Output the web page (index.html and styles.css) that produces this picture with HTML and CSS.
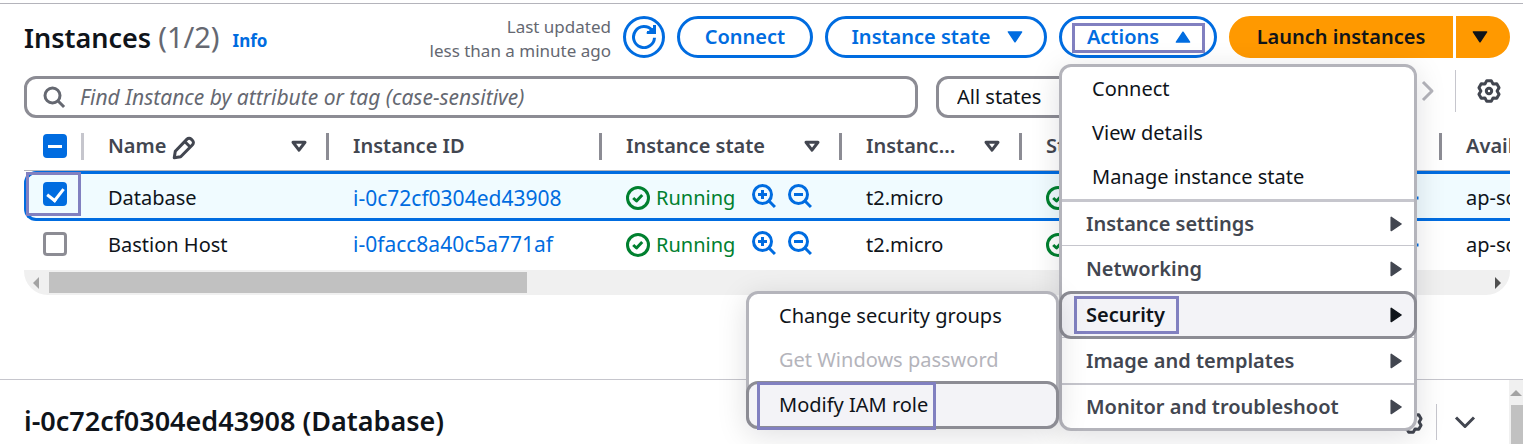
FILE: index.html
```html
<!DOCTYPE html>
<html lang="en">
<head>
<meta charset="utf-8">
<title>Instances</title>
<link rel="stylesheet" href="styles.css">
</head>
<body>
<svg class="sprite" aria-hidden="true">
  <symbol id="i-down" viewBox="0 0 16 16"><path d="M3.6 4.6h8.8L8 11.2z" fill="currentColor"/></symbol>
  <symbol id="i-up" viewBox="0 0 16 16"><path d="M3.6 11.4h8.8L8 4.8z" fill="currentColor"/></symbol>
  <symbol id="i-right" viewBox="0 0 16 16"><path d="M4.8 3.6v8.8L11.4 8z" fill="currentColor"/></symbol>
  <symbol id="i-sort" viewBox="0 0 16 16"><path d="M4 5.5h8l-4 5.3z"/></symbol>
  <symbol id="i-refresh" viewBox="0 0 16 16"><path d="M15 8.5A7 7 0 1 1 13.4 3.6"/><path d="M10 5h5V0M14.5 2.5v2H12z" stroke-linejoin="miter"/></symbol>
  <symbol id="i-search" viewBox="0 0 16 16"><circle cx="7" cy="7" r="5"/><path d="m10.7 10.7 4 4"/></symbol>
  <symbol id="i-edit" viewBox="0 0 16 16"><path d="M1.5 14.5l.7-4.3L10 2.1a2 2 0 0 1 2.8 0l.9.9a2 2 0 0 1 0 2.8L5.8 13.8zM9 4.2l2.8 2.8"/></symbol>
  <symbol id="i-ok" viewBox="0 0 16 16"><circle cx="8" cy="8" r="7"/><path d="m4.8 8 2.2 2 3.8-4"/></symbol>
  <symbol id="i-zin" viewBox="0 0 16 16"><circle cx="7" cy="7" r="6"/><path d="m11.3 11.3 4 4M4 7h6M7 4v6"/></symbol>
  <symbol id="i-zout" viewBox="0 0 16 16"><circle cx="7" cy="7" r="6"/><path d="m11.3 11.3 4 4M4 7h6"/></symbol>
  <symbol id="i-plus" viewBox="0 0 16 16"><path d="M1 8h14M8 1v14"/></symbol>
  <symbol id="i-gear" viewBox="-8 -8 16 16"><path d="M-1.5-6.9h3l1.2 2.2 2.5-.1L6.7-2.2 5.4 0l1.3 2.2-1.5 2.6-2.5-.1-1.2 2.2h-3l-1.2-2.2-2.5.1-1.5-2.6L-5.4 0l-1.3-2.2 1.5-2.6 2.5.1z"/><circle r="1.8"/></symbol>
  <symbol id="i-next" viewBox="0 0 16 16"><path d="m4 2 6 6-6 6"/></symbol>
  <symbol id="i-expand" viewBox="0 0 16 16"><path d="m2 5 6 6 6-6"/></symbol>
</svg>

<div class="page">
  <main class="instances">
    <header class="toolbar">
      <h1 class="title">Instances <span class="count">(1/2)</span></h1>
      <a class="info" href="#">Info</a>
      <p class="updated">Last updated<br>less than a minute ago</p>
      <div class="actions">
        <button class="btn btn-round" aria-label="Refresh"><svg class="icon"><use href="#i-refresh"/></svg></button>
        <button class="btn">Connect</button>
        <button class="btn btn-menu">Instance state <svg class="icon"><use href="#i-down"/></svg></button>
        <div class="dropdown">
          <button class="btn btn-menu btn-actions" aria-expanded="true">Actions <svg class="icon"><use href="#i-up"/></svg></button>
          <span class="mark mark-actions"></span>
          <div class="menu" role="menu">
            <button class="item" role="menuitem">Connect</button>
            <button class="item" role="menuitem">View details</button>
            <button class="item" role="menuitem">Manage instance state</button>
            <button class="item group first" role="menuitem">Instance settings <svg class="icon"><use href="#i-right"/></svg></button>
            <button class="item group" role="menuitem">Networking <svg class="icon"><use href="#i-right"/></svg></button>
            <div class="nested">
              <button class="item group active" role="menuitem" aria-expanded="true">Security <svg class="icon"><use href="#i-right"/></svg></button>
              <span class="mark mark-security"></span>
              <div class="menu submenu" role="menu">
                <button class="item" role="menuitem">Change security groups</button>
                <button class="item" role="menuitem" disabled>Get Windows password</button>
                <button class="item active" role="menuitem">Modify IAM role</button>
                <span class="mark mark-role"></span>
              </div>
            </div>
            <button class="item group" role="menuitem">Image and templates <svg class="icon"><use href="#i-right"/></svg></button>
            <button class="item group last" role="menuitem">Monitor and troubleshoot <svg class="icon"><use href="#i-right"/></svg></button>
          </div>
        </div>
        <div class="split">
          <button class="btn btn-primary">Launch instances</button>
          <button class="btn btn-primary btn-caret" aria-label="More launch options"><svg class="icon"><use href="#i-down"/></svg></button>
        </div>
      </div>
    </header>

    <div class="filters">
      <label class="search">
        <svg class="icon"><use href="#i-search"/></svg>
        <input type="text" aria-label="Find Instance" placeholder="Find Instance by attribute or tag (case-sensitive)">
      </label>
      <select class="states" aria-label="State"><option>All states</option></select>
      <div class="pager">
        <button class="plain next" aria-label="Next page"><svg class="icon"><use href="#i-next"/></svg></button>
        <button class="plain prefs" aria-label="Preferences"><svg class="icon"><use href="#i-gear"/></svg></button>
      </div>
    </div>

    <div class="table-wrap">
      <table class="table">
        <colgroup><col class="c-check"><col class="c-name"><col class="c-id"><col class="c-state"><col class="c-type"><col class="c-status"><col class="c-alarm"><col class="c-zone"></colgroup>
        <thead>
          <tr>
            <th class="check"><input type="checkbox" class="box mixed" aria-label="Select all"></th>
            <th><div class="head"><span>Name</span><svg class="icon edit"><use href="#i-edit"/></svg><svg class="icon sort"><use href="#i-sort"/></svg></div></th>
            <th><div class="head"><span>Instance ID</span></div></th>
            <th><div class="head"><span>Instance state</span><svg class="icon sort"><use href="#i-sort"/></svg></div></th>
            <th><div class="head"><span>Instanc…</span><svg class="icon sort"><use href="#i-sort"/></svg></div></th>
            <th><div class="head"><span>St…</span></div></th>
            <th><div class="head"></div></th>
            <th><div class="head"><span>Availability Zone</span></div></th>
          </tr>
        </thead>
        <tbody>
          <tr class="selected">
            <td class="check"><input type="checkbox" class="box" aria-label="Select Database" checked><span class="mark mark-check"></span></td>
            <td>Database</td>
            <td><a class="id" href="#">i-0c72cf0304ed43908</a></td>
            <td><div class="state"><svg class="icon"><use href="#i-ok"/></svg><span>Running</span><button class="plain" aria-label="Include"><svg class="icon"><use href="#i-zin"/></svg></button><button class="plain" aria-label="Exclude"><svg class="icon"><use href="#i-zout"/></svg></button></div></td>
            <td>t2.micro</td>
            <td><div class="state"><svg class="icon"><use href="#i-ok"/></svg></div></td>
            <td class="alarm"><button class="plain" aria-label="Add alarm"><svg class="icon"><use href="#i-plus"/></svg></button></td>
            <td>ap-south-1a</td>
          </tr>
          <tr>
            <td class="check"><input type="checkbox" class="box" aria-label="Select Bastion Host"></td>
            <td>Bastion Host</td>
            <td><a class="id" href="#">i-0facc8a40c5a771af</a></td>
            <td><div class="state"><svg class="icon"><use href="#i-ok"/></svg><span>Running</span><button class="plain" aria-label="Include"><svg class="icon"><use href="#i-zin"/></svg></button><button class="plain" aria-label="Exclude"><svg class="icon"><use href="#i-zout"/></svg></button></div></td>
            <td>t2.micro</td>
            <td><div class="state"><svg class="icon"><use href="#i-ok"/></svg></div></td>
            <td class="alarm"><button class="plain" aria-label="Add alarm"><svg class="icon"><use href="#i-plus"/></svg></button></td>
            <td>ap-south-1a</td>
          </tr>
        </tbody>
      </table>
      <div class="scroll-x"><span class="arrow arrow-left"></span><span class="thumb"></span><span class="arrow arrow-right"></span></div>
    </div>
  </main>

  <section class="panel">
    <h2 class="panel-title">i-0c72cf0304ed43908 (Database)</h2>
    <div class="panel-tools">
      <button class="plain" aria-label="Panel preferences"><svg class="icon"><use href="#i-gear"/></svg></button>
      <button class="plain collapse" aria-label="Collapse panel"><svg class="icon"><use href="#i-expand"/></svg></button>
    </div>
    <div class="scroll-y"><span class="arrow arrow-top"></span><span class="thumb"></span></div>
  </section>
</div>
</body>
</html>
```
FILE: styles.css
```css
* { box-sizing: border-box; }

body {
  margin: 0;
  overflow: hidden;
  background: #fff;
  color: #0f141a;
  font: 20px/30px "Noto Sans", "Open Sans", sans-serif;
}

button, input, select { font: inherit; color: inherit; }
button { cursor: pointer; }
a { color: #006ce0; text-decoration: none; }

.sprite { position: absolute; width: 0; height: 0; }

.icon {
  width: 24px;
  height: 24px;
  flex: none;
  display: block;
  fill: none;
  stroke: currentColor;
  stroke-width: 2;
  stroke-linejoin: round;
}
.btn .icon, .item .icon { stroke-width: 1; }
.btn .icon { overflow: visible; }

.page {
  display: flex;
  flex-direction: column;
  height: 100vh;
  padding-top: 3px;
}

.instances {
  flex: 1;
  min-height: 0;
  border-top: 1px solid #b4b4bb;
  padding: 12px 13px 0 24px;
}

/* Toolbar */
.toolbar { display: flex; align-items: center; height: 42px; }
.title { margin: 0; font-size: 27px; line-height: 40px; font-weight: 600; }
.count { color: #656871; font-size: 29px; font-weight: 400; }
.info { margin: 8px 0 0 13px; font-size: 17px; font-weight: 700; }
.updated {
  margin: 4px 12px 0 auto;
  color: #656871;
  font-size: 17px;
  line-height: 24px;
  text-align: right;
}
.actions { display: flex; gap: 12px; }

.btn {
  display: flex;
  align-items: center;
  justify-content: center;
  gap: 12px;
  min-width: 136px;
  height: 42px;
  padding: 0;
  border: 3px solid #006ce0;
  border-radius: 21px;
  background: #fff;
  color: #006ce0;
  font-weight: 600;
  white-space: nowrap;
}
.btn-round { min-width: 42px; }
.btn.btn-round .icon { stroke-width: 2; }
.btn-menu { min-width: 222px; }
.btn-menu .icon { margin-right: -6px; }
.btn-actions { min-width: 158px; }
.split { display: flex; gap: 3px; }
.btn-primary {
  min-width: 224px;
  border-color: #ff9900;
  border-radius: 21px 0 0 21px;
  background: #ff9900;
  color: #0f141a;
}
.btn-caret { min-width: 54px; padding-right: 6px; border-radius: 0 21px 21px 0; }

/* Callout frames */
.mark {
  position: absolute;
  border: 3px solid #8180c0;
  pointer-events: none;
}
.mark-actions { top: 7px; left: 13px; right: 12px; bottom: 5px; }
.mark-check { top: -2px; left: -1px; right: 3px; bottom: 2px; }
.mark-security { top: 5px; left: 15px; width: 105px; height: 38px; }
.mark-role { left: 8px; bottom: -4px; width: 179px; height: 48px; }

/* Menus */
.dropdown { position: relative; }
.menu {
  position: absolute;
  z-index: 2;
  top: 48px;
  left: 0;
  width: 358px;
  border: 3px solid #b4b4bb;
  border-radius: 12px;
  background: #fff;
  box-shadow: 0 6px 30px rgba(0, 7, 22, 0.13);
}
.item {
  display: flex;
  align-items: center;
  justify-content: space-between;
  width: 100%;
  height: 44px;
  padding: 0 30px;
  border: 0;
  background: none;
  text-align: left;
}
.item:disabled { color: #b4b4bb; }
.group {
  height: 46px;
  padding: 0 6px 0 24px;
  border-top: 1px solid #c6c6cd;
  color: #424650;
  font-weight: 600;
}
.first { border-top-width: 3px; }
.last { height: 45px; border-top-width: 2px; }
.nested { position: relative; z-index: 1; margin: 0 -3px -2px; }
.active {
  height: 48px;
  border: 3px solid #8c8c94;
  border-radius: 12px;
  background: #f3f3f7;
}
.nested > .active { color: #0f141a; }
.submenu { top: 0; left: auto; right: 100%; width: 313px; }
.submenu .active { width: 313px; margin: -1px -3px -3px; }

/* Filters */
.filters { display: flex; align-items: center; margin-top: 18px; }
.search {
  display: flex;
  align-items: center;
  gap: 14px;
  flex: 1;
  height: 42px;
  padding: 0 15px;
  border: 3px solid #8c8c94;
  border-radius: 12px;
  color: #656871;
}
.search input { flex: 1; min-width: 0; padding: 0; border: 0; outline: 0; background: none; font-size: 21px; }
.search input::placeholder { color: #656871; font-style: italic; opacity: 1; }
.states {
  width: 250px;
  height: 42px;
  margin: 0 18px;
  padding: 0 18px;
  border: 3px solid #8c8c94;
  border-radius: 12px;
  background: #fff;
  appearance: none;
}
.pager { display: flex; align-items: center; justify-content: flex-end; width: 306px; margin-top: -12px; }
.plain { display: block; padding: 0; border: 0; background: none; }
.next { color: #b4b4bb; }
.prefs { margin-left: 14px; padding: 9px 9px 9px 21px; border-left: 1px solid #c6c6cd; color: #424650; }

/* Table */
.table-wrap { overflow: hidden; margin-top: 4px; }
.table { width: 1620px; table-layout: fixed; border-collapse: separate; border-spacing: 0; }
.c-check { width: 60px; }
.c-name { width: 245px; }
.c-id { width: 273px; }
.c-state { width: 240px; }
.c-type { width: 180px; }
.c-status { width: 180px; }
.c-alarm { width: 240px; }
th {
  height: 49px;
  padding: 0;
  border-bottom: 1px solid #b4b4bb;
  color: #424650;
  font-weight: 600;
  text-align: left;
}
.head {
  display: flex;
  align-items: center;
  height: 27px;
  padding: 0 15px 0 24px;
  border-right: 3px solid #8c8c94;
  white-space: nowrap;
}
.head .edit { margin: 4px 0 0 6px; }
.head .sort { margin-left: auto; }
td { height: 49px; padding: 0 0 2px 24px; white-space: nowrap; }
.selected td {
  height: 50px;
  padding-top: 4px;
  padding-bottom: 0;
  border-top: 3px solid #006ce0;
  border-bottom: 3px solid #006ce0;
  background: #f0fbff;
}
.id { font-size: 21px; }
.check { position: relative; padding: 0 0 0 19px; }
td.check { padding-bottom: 4px; }
th.check { background: linear-gradient(#c6c6cd, #c6c6cd) right center / 3px 27px no-repeat; }
.selected td.check {
  padding: 0 0 4px 16px;
  border-left: 3px solid #006ce0;
  border-radius: 12px 0 0 12px;
}
.alarm { text-align: right; }
.alarm .plain { margin: 0 22px 0 auto; color: #006ce0; }

.box {
  display: grid;
  place-content: center;
  appearance: none;
  width: 24px;
  height: 24px;
  margin: 0;
  border: 3px solid #8c8c94;
  border-radius: 4px;
  background: #fff;
}
.box:checked, .mixed { border-color: #006ce0; background: #006ce0; }
.box:checked::after {
  content: "";
  width: 8px;
  height: 13px;
  margin-bottom: 3px;
  border: solid #fff;
  border-width: 0 3px 3px 0;
  transform: rotate(38deg);
}
.mixed::after { content: ""; width: 14px; height: 3px; background: #fff; }

.state { display: flex; align-items: center; gap: 12px; color: #00802f; }
.state > span { margin-left: -6px; }
.state button { margin-bottom: 4px; color: #006ce0; }
.state button:nth-of-type(1) { margin-left: 5px; }

/* Scrollbars */
.scroll-x {
  display: flex;
  align-items: center;
  height: 25px;
  padding: 0 9px;
  border-radius: 0 0 24px 24px;
  background: #f0f0f0;
}
.thumb { background: #c1c1c1; }
.scroll-x .thumb { width: calc(33% - 6px); height: 21px; margin-left: 10px; }
.arrow { border: 6px solid transparent; }
.arrow-left { border-left: 0; border-right-color: #a3a3a3; }
.arrow-right { margin-left: auto; border-right: 0; border-left-color: #505050; }
.arrow-top { border-top: 0; border-bottom-color: #a3a3a3; }

/* Detail panel */
.panel {
  display: flex;
  align-items: center;
  height: 65px;
  border-top: 1px solid #c6c6cd;
  padding-left: 24px;
}
.panel-title { margin: 18px 0 0; font-size: 27px; line-height: 36px; font-weight: 600; }
.panel-tools { display: flex; align-items: center; gap: 13px; margin: 20px 32px 0 auto; color: #424650; }
.collapse { padding: 6px 0 6px 16px; border-left: 1px solid #c6c6cd; }
.scroll-y {
  display: flex;
  flex-direction: column;
  align-items: center;
  align-self: stretch;
  width: 14px;
  padding-top: 10px;
  background: #f0f0f0;
}
.scroll-y .thumb { flex: 1; width: 12px; margin: 9px 0 0 2px; }
```
